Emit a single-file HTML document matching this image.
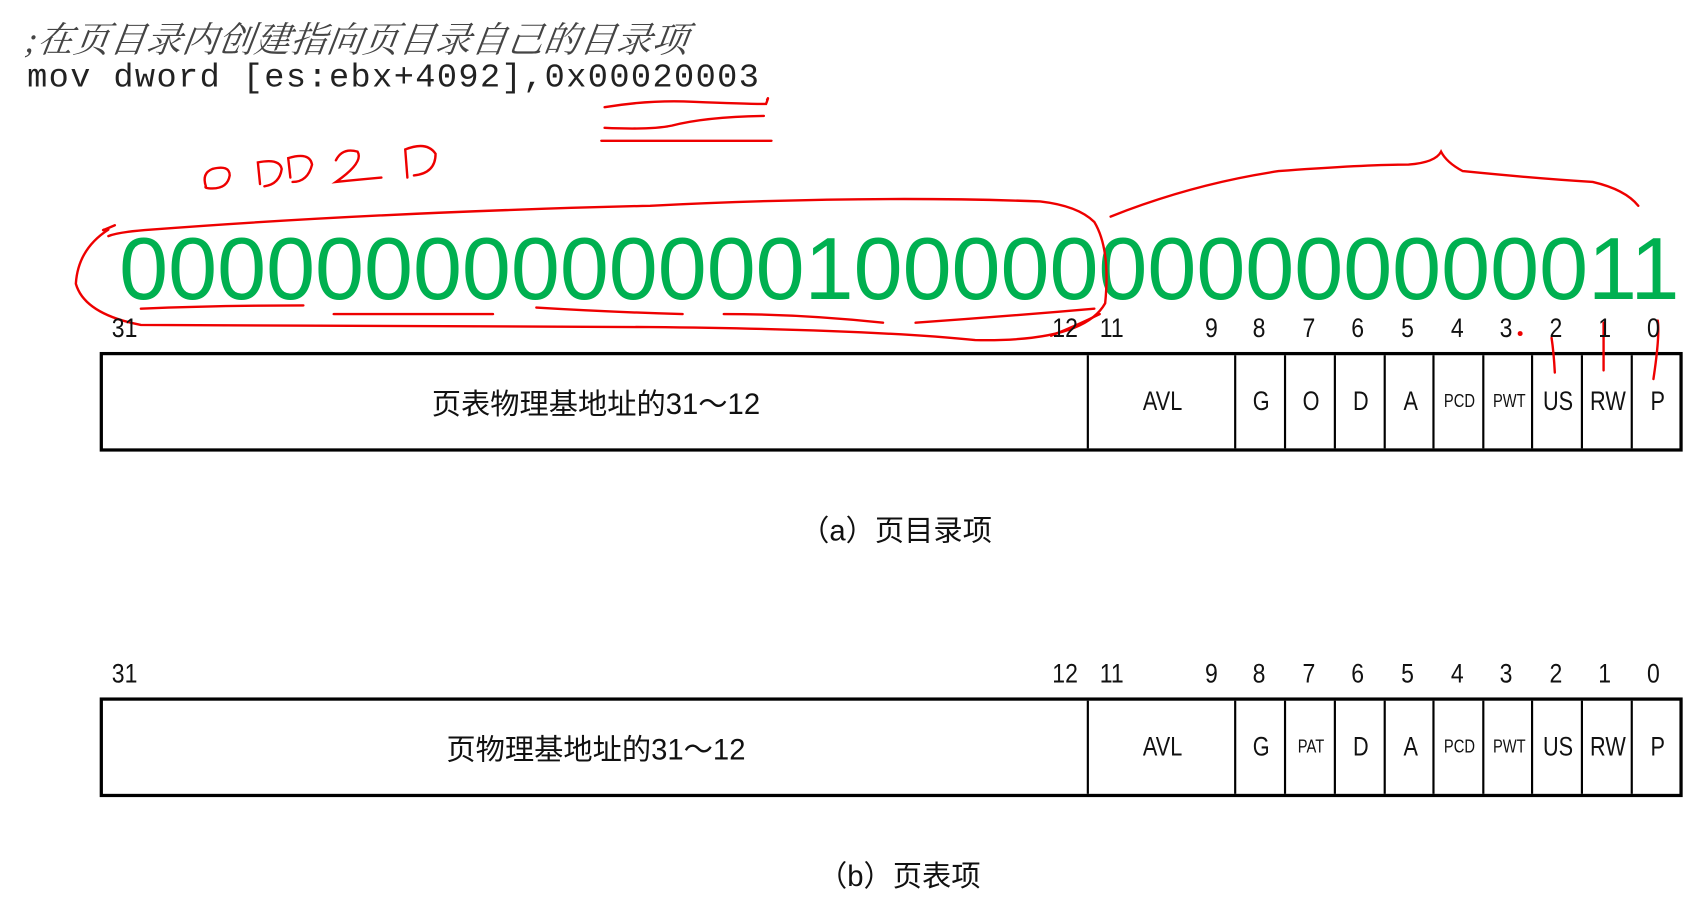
<!DOCTYPE html>
<html><head><meta charset="utf-8"><style>
html,body{margin:0;padding:0;background:#fff;width:1699px;height:900px;overflow:hidden}
#w{position:absolute;left:0;top:0;width:1568px;height:831px;transform:scale(1.0835,1.083);transform-origin:0 0}
.a{position:absolute;white-space:nowrap}
.cmt{left:24px;top:11px;font:italic 33px "Liberation Serif","Noto Serif CJK SC","Noto Sans CJK SC",serif;letter-spacing:-1px;color:#444;transform:skewX(-8deg)}
.mov{left:25px;top:55px;font:31px "Liberation Mono",monospace;letter-spacing:1.3px;color:#222}
.bin{left:110px;top:203px;font:81px "Liberation Sans",sans-serif;color:#00b050;transform-origin:0 0}
.n{position:absolute;font:25px "Liberation Sans",sans-serif;color:#111;transform:translateX(-50%) scaleX(0.85)}
.box{position:absolute;left:92px;width:1455px;height:86px;border:3px solid #000}
.c{position:absolute;top:0;bottom:0;border-left:2.5px solid #000}
.t{position:absolute;top:50%;transform:translate(-50%,-50%) scaleX(0.8);font:25px "Liberation Sans","Noto Sans CJK SC",sans-serif;color:#111;white-space:nowrap}
.s{font-size:17px}
.big{font-size:27px}
.cap{position:absolute;font:27px "Liberation Sans","Noto Sans CJK SC",sans-serif;color:#111;transform:translateX(-50%);white-space:nowrap}
</style></head><body><div id="w">
<div class="a cmt" id="cmt">;在页目录内创建指向页目录自己的目录项</div>
<div class="a mov">mov dword [es:ebx+4092],0x00020003</div>
<div class="a bin" id="bin">00000000000000100000000000000011</div>

<div class="box" style="top:325px">
 <div class="t big" style="left:455px;transform:translate(-50%,-50%) scaleX(1)">页表物理基地址的31～12</div>
</div>
<div class="cap" style="left:827px;top:468px">（a）页目录项</div>
<div class="box" style="top:644px">
 <div class="t big" style="left:455px;transform:translate(-50%,-50%) scaleX(1)">页物理基地址的31～12</div>
</div>
<div class="cap" style="left:830px;top:787px">（b）页表项</div>

<svg style="position:absolute;left:0;top:0" width="1568" height="831" viewBox="0 0 1568 831" fill="none" stroke="#e00" stroke-width="2.2" stroke-linecap="round">
<path d="M558 99 Q600 92 640 94 Q690 96 707 96 Q710 88 708 92"/>
<path d="M558 118 Q600 120 620 116 Q650 108 705 107"/>
<path d="M555 130 L712 130"/>
<path d="M190 172 Q186 160 196 156 Q212 152 212 162 Q210 174 196 174 Q188 174 190 172"/>
<path d="M240 170 L238 150 Q258 146 260 156 Q258 170 244 172"/>
<path d="M268 164 L266 146 Q286 140 288 152 Q284 168 270 168"/>
<path d="M310 148 Q316 136 330 140 Q336 150 310 168 Q330 166 352 164"/>
<path d="M376 164 L374 138 Q394 130 402 142 Q402 160 382 162"/>
<path d="M106 208 Q92 214 96 212 M100 212 Q72 230 70 262 Q78 290 130 300 Q300 300 600 302 Q800 304 900 314 Q1000 316 1020 280 Q1025 230 1010 205 Q995 190 960 186 Q800 180 600 190 Q350 196 140 212 Q110 214 100 218"/>
<path d="M1025 200 Q1100 170 1180 158 Q1260 152 1300 152 Q1325 150 1330 140 Q1335 150 1350 158 Q1420 165 1470 168 Q1500 175 1512 190"/>
<path d="M130 285 Q200 282 280 282"/>
<path d="M308 290 Q400 290 455 290"/>
<path d="M495 284 Q560 288 630 290"/>
<path d="M668 290 Q740 290 815 298"/>
<path d="M845 298 Q930 292 1010 285"/>
<path d="M970 310 Q995 300 1015 290"/>
<path d="M1432 312 Q1434 325 1435 344"/>
<path d="M1480 298 L1480 342"/>
<path d="M1530 296 Q1532 310 1526 350"/>
<circle cx="1403" cy="308" r="1.2" fill="#e00"/>
</svg>
</div>
<script>
var w=document.getElementById('w');
var nums=[[115,'31'],[983,'12'],[1026,'11'],[1118,'9'],[1162,'8'],[1208,'7'],[1253,'6'],[1299,'5'],[1345,'4'],[1390,'3'],[1436,'2'],[1481,'1'],[1526,'0']];
[289,608].forEach(function(y){nums.forEach(function(p){var d=document.createElement('div');d.className='n';d.style.left=p[0]+'px';d.style.top=y+'px';d.textContent=p[1];w.appendChild(d);});});
var divs=[1003,1139,1185,1231,1277,1322,1368,1413,1459,1505];
var la=['AVL','G','O','D','A','PCD','PWT','US','RW','P'];
var lb=['AVL','G','PAT','D','A','PCD','PWT','US','RW','P'];
var boxes=document.querySelectorAll('.box');
[la,lb].forEach(function(L,bi){var b=boxes[bi];
 for(var i=0;i<divs.length;i++){var x=divs[i]-92;var c=document.createElement('div');c.className='c';c.style.left=(x-3)+'px';b.appendChild(c);
  var nx=(i+1<divs.length?divs[i+1]:1550)-92;var t=document.createElement('div');t.className='t'+(L[i].length==3&&L[i]!='AVL'?' s':'');t.style.left=((x+nx)/2-1)+'px';t.textContent=L[i];b.appendChild(t);}
});
var bin=document.getElementById('bin');var wd=bin.getBoundingClientRect().width/1.0835;bin.style.transform='scaleX('+(1440/wd)+')';
var cm=document.getElementById('cmt');var cw=cm.getBoundingClientRect().width/1.0835;cm.style.letterSpacing=(-1+(620-cw)/20)+'px';
</script>
</body></html>
